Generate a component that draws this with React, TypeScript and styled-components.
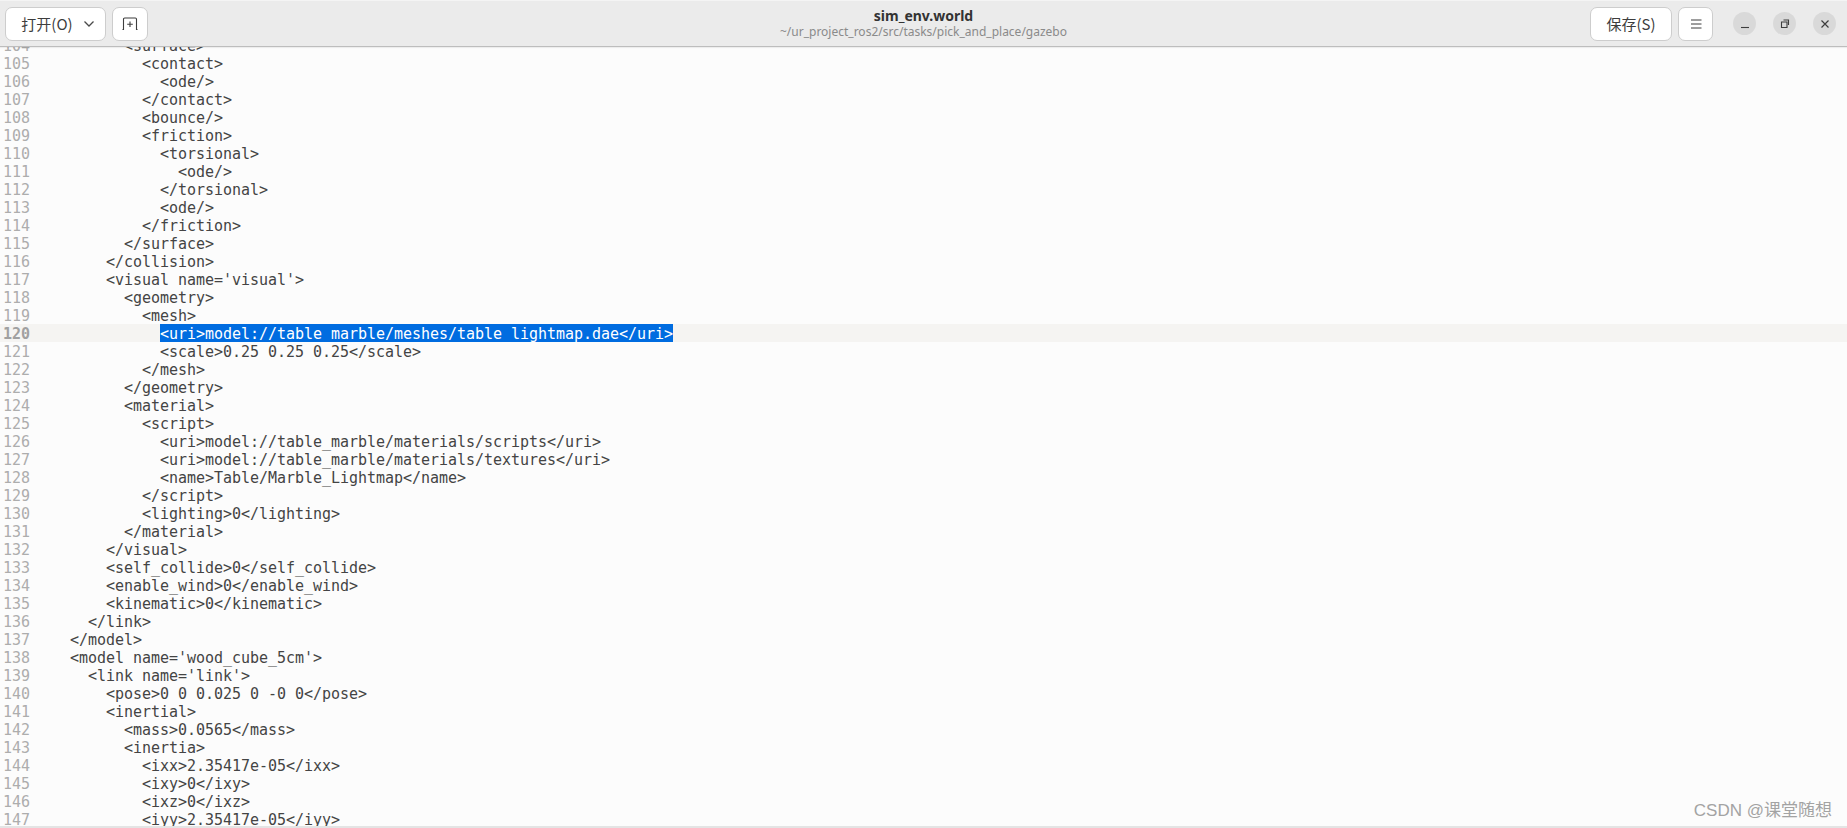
import styled, { createGlobalStyle } from "styled-components"

const Global = createGlobalStyle`
  html, body { margin: 0; padding: 0; height: 100%; overflow: hidden; background: #fcfcfc; }
`

const Win = styled.div`
  position: relative;
  display: flex;
  flex-direction: column;
  height: 828px;
  overflow: hidden;
  background: #fcfcfc;
  border-bottom: 2px solid #e4e4e4;
  box-sizing: border-box;
`

const Header = styled.header`
  flex: none;
  display: grid;
  grid-template-columns: 1fr auto 1fr;
  align-items: center;
  height: 47px;
  box-sizing: border-box;
  background: #ebebeb;
  border-top: 1px solid #f4f4f4;
  border-bottom: 1px solid #bdbdbd;
  box-shadow: 0 1px 1px rgba(0, 0, 0, 0.06);
  position: relative;
  z-index: 1;
  font-family: "Noto Sans", "Noto Sans CJK SC", sans-serif;
`

const Side = styled.div<{ $right?: boolean }>`
  display: flex;
  align-items: center;
  justify-content: ${(p) => (p.$right ? "flex-end" : "flex-start")};
  padding: ${(p) => (p.$right ? "0 11px 0 0" : "0 0 0 5px")};
`

const Button = styled.button<{ $w: number; $pad?: number }>`
  display: flex;
  align-items: center;
  justify-content: center;
  gap: 10px;
  width: ${(p) => p.$w}px;
  height: 34px;
  margin-right: 6px;
  padding: 0 0 0 ${(p) => p.$pad ?? 0}px;
  background: #fff;
  border: 1px solid #cdcdcd;
  border-radius: 7px;
  color: #3d3d3d;
  font-family: "Noto Sans CJK SC", "Noto Sans", sans-serif;
  font-size: 15px;
`

const TitleBox = styled.div`
  display: flex;
  flex-direction: column;
  align-items: center;
  margin-top: -2px;
`

const Title = styled.div`
  font-size: 14px;
  line-height: 17px;
  font-weight: 700;
  color: #333;
`

const Sub = styled.div`
  font-size: 12px;
  line-height: 15px;
  color: #8a8a8a;
`

const WinBtn = styled.span<{ $gap?: number }>`
  display: flex;
  align-items: center;
  justify-content: center;
  width: 23px;
  height: 23px;
  margin-left: ${(p) => p.$gap ?? 17}px;
  border-radius: 50%;
  background: #d9d9d9;
  color: #3d3d3d;
`

const Editor = styled.main`
  flex: 1;
  overflow: hidden;
`

const Lines = styled.div`
  margin-top: -11px;
  font-family: "DejaVu Sans Mono", monospace;
  font-size: 15px;
  letter-spacing: -0.03px;
  line-height: 20px;
`

const Row = styled.div<{ $current?: boolean }>`
  display: flex;
  height: 18px;
  background: ${(p) => (p.$current ? "#f5f4f2" : "transparent")};
`

const Num = styled.span<{ $current?: boolean }>`
  flex: none;
  width: 52px;
  padding-left: 3px;
  box-sizing: border-box;
  color: ${(p) => (p.$current ? "#a0a0a0" : "#adadad")};
  font-weight: ${(p) => (p.$current ? 700 : 400)};
`

const Code = styled.span`
  white-space: pre;
  color: #444;
`

const Selected = styled.span`
  background: #006ce0;
  color: #fff;
  display: inline-block;
  height: 18px;
  vertical-align: top;
`

const Mark = styled.div`
  position: absolute;
  right: 15px;
  bottom: 5px;
  font-family: "Liberation Sans", "Noto Sans CJK SC", sans-serif;
  font-size: 17px;
  line-height: 20px;
  color: #a3a3a3;
`

const code: [number, string][] = [
  [8, "<surface>"],
  [10, "<contact>"],
  [12, "<ode/>"],
  [10, "</contact>"],
  [10, "<bounce/>"],
  [10, "<friction>"],
  [12, "<torsional>"],
  [14, "<ode/>"],
  [12, "</torsional>"],
  [12, "<ode/>"],
  [10, "</friction>"],
  [8, "</surface>"],
  [6, "</collision>"],
  [6, "<visual name='visual'>"],
  [8, "<geometry>"],
  [10, "<mesh>"],
  [12, "<uri>model://table_marble/meshes/table_lightmap.dae</uri>"],
  [12, "<scale>0.25 0.25 0.25</scale>"],
  [10, "</mesh>"],
  [8, "</geometry>"],
  [8, "<material>"],
  [10, "<script>"],
  [12, "<uri>model://table_marble/materials/scripts</uri>"],
  [12, "<uri>model://table_marble/materials/textures</uri>"],
  [12, "<name>Table/Marble_Lightmap</name>"],
  [10, "</script>"],
  [10, "<lighting>0</lighting>"],
  [8, "</material>"],
  [6, "</visual>"],
  [6, "<self_collide>0</self_collide>"],
  [6, "<enable_wind>0</enable_wind>"],
  [6, "<kinematic>0</kinematic>"],
  [4, "</link>"],
  [2, "</model>"],
  [2, "<model name='wood_cube_5cm'>"],
  [4, "<link name='link'>"],
  [6, "<pose>0 0 0.025 0 -0 0</pose>"],
  [6, "<inertial>"],
  [8, "<mass>0.0565</mass>"],
  [8, "<inertia>"],
  [10, "<ixx>2.35417e-05</ixx>"],
  [10, "<ixy>0</ixy>"],
  [10, "<ixz>0</ixz>"],
  [10, "<iyy>2.35417e-05</iyy>"],
]

export default function App() {
  return (
    <Win>
      <Global />
      <Header>
        <Side>
          <Button $w={101} $pad={5}>
            <span>打开(O)</span>
            <svg width="12" height="8" viewBox="0 0 12 8" fill="none" stroke="#4a4a4a" strokeWidth="1.3">
              <path d="M1.500 1.500 6 6l4.500-4.500" />
            </svg>
          </Button>
          <Button $w={36}>
            <svg width="16" height="14" viewBox="0 0 16 14" fill="none" stroke="#3d3d3d" strokeWidth="1.1">
              <path d="M.5 12.500h1V2.200q0-1.200 1.200-1.200h10.600q1.200 0 1.200 1.200v10.300h1" />
              <path d="M8 4.500v5.500M5.200 7.200h5.600" />
            </svg>
          </Button>
        </Side>
        <TitleBox>
          <Title>sim_env.world</Title>
          <Sub>~/ur_project_ros2/src/tasks/pick_and_place/gazebo</Sub>
        </TitleBox>
        <Side $right>
          <Button $w={82}>保存(S)</Button>
          <Button $w={35}>
            <svg width="12" height="10" viewBox="0 0 12 10" fill="none" stroke="#3d3d3d" strokeWidth="1">
              <path d="M1 1h10.500M1 5h10.500M1 9h10.500" />
            </svg>
          </Button>
          <WinBtn $gap={14}>
            <svg width="10" height="10" viewBox="0 0 10 10" fill="none" stroke="#3d3d3d" strokeWidth="1.1">
              <path d="M1 8.500h8" />
            </svg>
          </WinBtn>
          <WinBtn>
            <svg width="10" height="10" viewBox="0 0 10 10" fill="none" stroke="#3d3d3d" strokeWidth="1.1">
              <path d="M1.500 3h5.500v5.500H1.500zM3.500 1h5v5" />
            </svg>
          </WinBtn>
          <WinBtn>
            <svg width="10" height="10" viewBox="0 0 10 10" fill="none" stroke="#3d3d3d" strokeWidth="1.2">
              <path d="M1.500 1.500l7 7M8.500 1.500l-7 7" />
            </svg>
          </WinBtn>
        </Side>
      </Header>
      <Editor>
        <Lines>
          {code.map(([indent, text], i) => {
            const n = 104 + i
            const current = n === 120
            return (
              <Row key={n} $current={current}>
                <Num $current={current}>{n}</Num>
                <Code>
                  {" ".repeat(indent)}
                  {current ? <Selected>{text}</Selected> : text}
                </Code>
              </Row>
            )
          })}
        </Lines>
      </Editor>
      <Mark>CSDN @课堂随想</Mark>
    </Win>
  )
}
